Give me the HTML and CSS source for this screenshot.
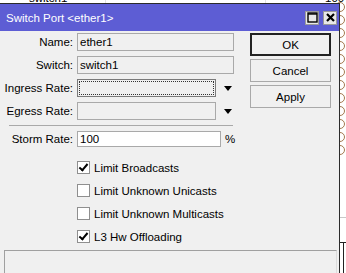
FILE: index.html
```html
<!DOCTYPE html>
<html lang="en">
<head>
    <meta charset="UTF-8">
    <title>Switch Port &lt;ether1&gt;</title>
    <link rel="stylesheet" href="styles.css">
</head>
<body>

<div class="desktop">
    <!-- table behind the dialog, mostly hidden -->
    <span class="bg-cell bg-name">switch1</span>
    <span class="bg-cell bg-num">100</span>
    <span class="bg-col bg-col1"></span>
    <span class="bg-col bg-col2"></span>
    <div class="bg-icons">
        <i></i><i></i><i></i><i></i><i></i><i></i><i></i><i></i><i></i><i></i><i></i><i></i>
    </div>
    <span class="bg-line bg-line1"></span>
    <span class="bg-line bg-line2"></span>
    <span class="bg-vline"></span>

    <div class="window">
        <div class="titlebar">
            <span class="title">Switch Port &lt;ether1&gt;</span>
            <span class="tb-btn">
                <svg width="11" height="11" viewBox="0 0 11 11"><rect x="1" y="1" width="9" height="9" fill="none" stroke="#000" stroke-width="1.4"/><line x1="1" y1="2" x2="10" y2="2" stroke="#000" stroke-width="1.4"/></svg>
            </span>
            <span class="tb-btn">
                <svg width="11" height="11" viewBox="0 0 11 11"><path d="M2 2 L9 9 M9 2 L2 9" stroke="#000" stroke-width="2.2"/></svg>
            </span>
        </div>

        <div class="content">
            <div class="form">
                <div class="row">
                    <label>Name:</label>
                    <div class="field disabled wide">ether1</div>
                </div>
                <div class="row">
                    <label>Switch:</label>
                    <div class="field disabled wide">switch1</div>
                </div>
                <div class="row">
                    <label>Ingress Rate:</label>
                    <div class="field focused narrow"><span class="focus-ring"></span></div>
                    <span class="arrow"></span>
                </div>
                <div class="row">
                    <label>Egress Rate:</label>
                    <div class="field disabled narrow"></div>
                    <span class="arrow"></span>
                </div>

                <div class="separator"></div>

                <div class="row storm">
                    <label>Storm Rate:</label>
                    <div class="field white storm-field">100</div>
                    <span class="unit">%</span>
                </div>

                <div class="checks">
                    <div class="check"><span class="box checked"></span>Limit Broadcasts</div>
                    <div class="check"><span class="box"></span>Limit Unknown Unicasts</div>
                    <div class="check"><span class="box"></span>Limit Unknown Multicasts</div>
                    <div class="check"><span class="box checked"></span>L3 Hw Offloading</div>
                </div>
            </div>

            <div class="buttons">
                <button class="btn default">OK</button>
                <button class="btn">Cancel</button>
                <button class="btn">Apply</button>
            </div>
        </div>

        <div class="statusbar"></div>
    </div>
</div>

</body>
</html>
```

FILE: styles.css
```css
body {
    margin: 0;
    padding: 0;
    font-family: "Liberation Sans", Arial, sans-serif;
    font-size: 11.5px;
    color: #000;
    background-color: #fff;
    overflow: hidden;
}
.desktop {
    position: relative;
    width: 346px;
    height: 273px;
    overflow: hidden;
    background-color: #fff;
}
.bg-cell {
    position: absolute;
    top: -8px;
    font-size: 11.5px;
}
.bg-name {
    left: 29px;
}
.bg-num {
    left: 325px;
}
.bg-col {
    position: absolute;
    top: 0;
    width: 1px;
    height: 4px;
    background-color: #e2e2e2;
}
.bg-col1 {
    left: 105px;
}
.bg-col2 {
    left: 265px;
}
.bg-icons {
    position: absolute;
    left: 335px;
    top: 2px;
    display: flex;
    flex-direction: column;
    gap: 3px;
}
.bg-icons i {
    display: block;
    width: 8px;
    height: 8px;
    border: 1.5px solid #a47a50;
    border-radius: 50%;
}
.bg-line {
    position: absolute;
    left: 340px;
    width: 6px;
    height: 1px;
}
.bg-line1 {
    top: 217px;
    background-color: #c8c8c8;
}
.bg-line2 {
    top: 242px;
    background-color: #222;
}
.bg-vline {
    position: absolute;
    left: 343px;
    top: 242px;
    width: 1px;
    height: 40px;
    background-color: #222;
}
.window {
    position: absolute;
    left: -1px;
    top: 3px;
    width: 339px;
    height: 280px;
    border: 1px solid #2b2b2b;
    background-color: #f0f0f0;
    z-index: 1;
}
.titlebar {
    height: 27px;
    background-color: #5d5dd4;
    display: flex;
    align-items: center;
    padding: 0 2px 0 6px;
    gap: 4px;
}
.title {
    flex: 1;
    color: #fff;
    font-size: 11.5px;
}
.tb-btn {
    width: 12px;
    height: 12px;
    background-color: #e8e8e8;
    border: 1px solid #9a9a9a;
    display: flex;
    align-items: center;
    justify-content: center;
}
.content {
    display: flex;
    padding-top: 2px;
    height: 217px;
}
.form {
    width: 250px;
}
.row {
    display: flex;
    align-items: center;
    height: 18px;
    margin-bottom: 5px;
}
.row label {
    width: 73px;
    text-align: right;
    padding-right: 4px;
    flex-shrink: 0;
}
.field {
    box-sizing: border-box;
    height: 18px;
    border: 1px solid #a9a9a9;
    padding: 0 2px;
    line-height: 16px;
    position: relative;
}
.disabled {
    background-color: #f0f0f0;
}
.white {
    background-color: #fff;
}
.focused {
    background-color: #f0f0f0;
    border-color: #7a7a7a;
}
.focus-ring {
    position: absolute;
    left: 1px;
    top: 1px;
    right: 1px;
    bottom: 1px;
    border: 1px dotted #333;
}
.wide {
    width: 157px;
}
.narrow {
    width: 139px;
}
.arrow {
    width: 0;
    height: 0;
    margin-left: 8px;
    border-left: 4px solid transparent;
    border-right: 4px solid transparent;
    border-top: 5px solid #000;
}
.separator {
    height: 1px;
    background-color: #a9a9a9;
    margin: 1px 0 5px 9px;
    width: 224px;
}
.storm {
    height: 16px;
}
.storm-field {
    width: 144px;
    height: 16px;
    line-height: 14px;
}
.unit {
    margin-left: 4px;
}
.checks {
    padding-left: 77px;
    padding-top: 9px;
}
.check {
    display: flex;
    align-items: center;
    height: 13px;
    margin-bottom: 10px;
}
.box {
    box-sizing: border-box;
    width: 13px;
    height: 13px;
    border: 1px solid #8f8f8f;
    background-color: #fff;
    margin-right: 4px;
    position: relative;
}
.checked::after {
    content: "";
    position: absolute;
    left: 3px;
    top: 0px;
    width: 3px;
    height: 7px;
    border-right: 2px solid #000;
    border-bottom: 2px solid #000;
    transform: rotate(40deg);
}
.buttons {
    display: flex;
    flex-direction: column;
    gap: 3px;
    padding-left: 0;
}
.btn {
    width: 81px;
    height: 23px;
    font-family: "Liberation Sans", Arial, sans-serif;
    font-size: 11.5px;
    background-color: #f0f0f0;
    border: 1px solid #a9a9a9;
    padding: 0;
    color: #000;
}
.default {
    border: 2px solid #222;
}
.statusbar {
    box-sizing: border-box;
    margin-left: 4px;
    width: 333px;
    height: 30px;
    border-top: 1px solid #a0a0a0;
    border-left: 1px solid #a0a0a0;
    border-right: 1px solid #dcdcdc;
}
```
